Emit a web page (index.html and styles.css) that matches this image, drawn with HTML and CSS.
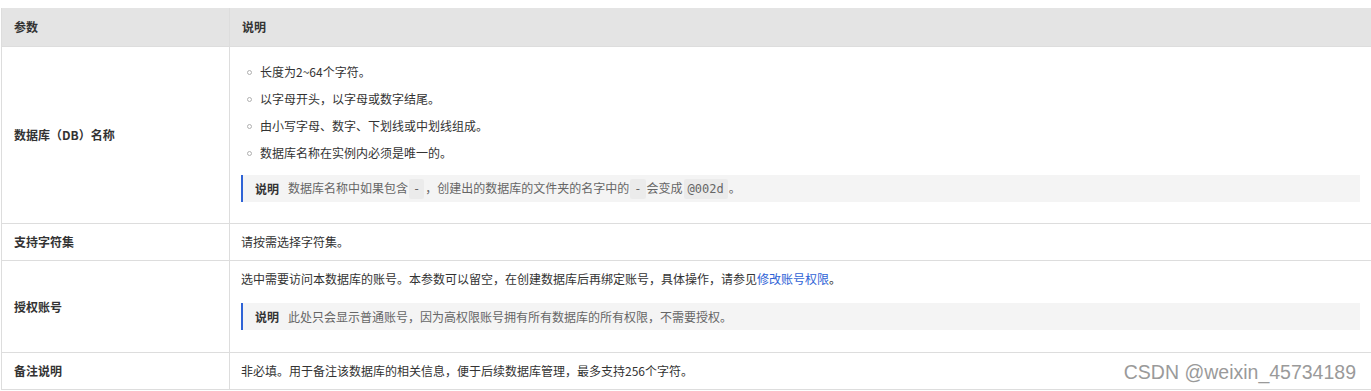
FILE: index.html
```html
<!DOCTYPE html>
<html lang="zh-CN">
<head>
<meta charset="utf-8">
<title>参数说明</title>
<link rel="stylesheet" href="styles.css">
</head>
<body>
<div class="page">
  <table class="params">
    <colgroup>
      <col class="col-name">
      <col class="col-desc">
    </colgroup>
    <thead>
      <tr>
        <th>参数</th>
        <th>说明</th>
      </tr>
    </thead>
    <tbody>
      <tr>
        <td class="name">数据库（DB）名称</td>
        <td class="desc">
          <ul class="rules">
            <li>长度为2~64个字符。</li>
            <li>以字母开头，以字母或数字结尾。</li>
            <li>由小写字母、数字、下划线或中划线组成。</li>
            <li>数据库名称在实例内必须是唯一的。</li>
          </ul>
          <div class="note"><span class="note-title">说明</span><span class="note-text">数据库名称中如果包含<code>-</code>，创建出的数据库的文件夹的名字中的<code>-</code>会变成<code>@002d</code>。</span></div>
        </td>
      </tr>
      <tr>
        <td class="name">支持字符集</td>
        <td class="desc"><p>请按需选择字符集。</p></td>
      </tr>
      <tr>
        <td class="name">授权账号</td>
        <td class="desc">
          <p class="lead">选中需要访问本数据库的账号。本参数可以留空，在创建数据库后再绑定账号，具体操作，请参见<a class="link" href="#">修改账号权限</a>。</p>
          <div class="note note-last"><span class="note-title">说明</span><span class="note-text">此处只会显示普通账号，因为高权限账号拥有所有数据库的所有权限，不需要授权。</span></div>
        </td>
      </tr>
      <tr>
        <td class="name">备注说明</td>
        <td class="desc"><p>非必填。用于备注该数据库的相关信息，便于后续数据库管理，最多支持256个字符。</p></td>
      </tr>
    </tbody>
  </table>
  <div class="watermark">CSDN @weixin_45734189</div>
</div>
</body>
</html>
```

FILE: styles.css
```css
html, body {
  margin: 0;
  padding: 0;
  background: #ffffff;
  overflow: hidden;
}

body {
  font-family: "Noto Sans CJK SC", "Microsoft YaHei", "Liberation Sans", sans-serif;
  font-size: 12px;
  color: #333333;
}

.page {
  position: relative;
  width: 1371px;
  height: 391px;
  padding: 8px 0 0 1px;
  box-sizing: border-box;
}

.params {
  width: 1372px;
  border-collapse: collapse;
  table-layout: fixed;
  border: 1px solid #dddddd;
  border-top: none;
}

.col-name { width: 228px; }

.params th {
  background: #e4e4e4;
  font-weight: bold;
  text-align: left;
  padding: 10px 12px;
  line-height: 18px;
  border-right: 1px solid #dddddd;
  border-bottom: 1px solid #dddddd;
}

.params td {
  border: 1px solid #dddddd;
  line-height: 18px;
  padding: 9px 12px 9px 11px;
}

.params td.name {
  font-weight: bold;
  vertical-align: middle;
  padding-left: 12px;
}

.params td.desc {
  vertical-align: top;
}

.desc p {
  margin: 0;
}

.desc p.lead {
  margin-bottom: 15px;
}

.rules {
  list-style: none;
  margin: 2px 0 0 0;
  padding: 0;
}

.rules li {
  position: relative;
  line-height: 27px;
  padding-left: 19px;
}

.rules li::before {
  content: "";
  position: absolute;
  left: 6px;
  top: 12px;
  width: 3px;
  height: 3px;
  border: 1px solid #b0b0b0;
  border-radius: 50%;
}

.note {
  display: flex;
  align-items: center;
  height: 27px;
  margin: 9px 0 12px 0;
  background: #f4f4f4;
  border-left: 2px solid #2f63d6;
  padding-left: 12px;
}

.note-last {
  margin-bottom: 13px;
}

.note-title {
  font-weight: bold;
  color: #333333;
  margin-right: 9px;
}

.note-text {
  color: #666666;
}

.note code {
  font-family: "DejaVu Sans Mono", "Liberation Mono", monospace;
  font-size: 12px;
  color: #666666;
  background: #ebebeb;
  padding: 3px 4px;
  margin: 0 1px;
  border-radius: 2px;
}

.link {
  color: #2f63d6;
  text-decoration: none;
}

.watermark {
  position: absolute;
  right: 15px;
  top: 360px;
  font-family: "Liberation Sans", Arial, sans-serif;
  font-size: 19.5px;
  line-height: 24px;
  color: #9a9a9a;
  text-shadow: 0 0 1px #ffffff;
}
```
